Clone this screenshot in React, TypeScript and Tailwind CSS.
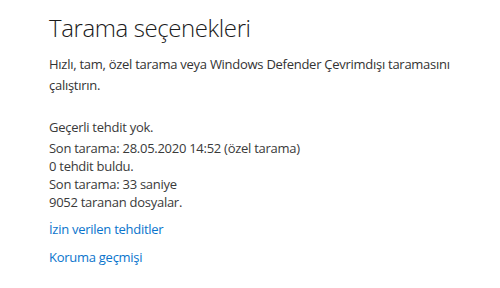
export default function App() {
  return (
    <div className="w-[500px] h-[288px] bg-white overflow-hidden pl-[49px] pt-[10px]" style={{ fontFamily: '"Open Sans", "Noto Sans", sans-serif' }}>
      <h1 className="text-[24px] leading-[36px] font-light text-[#1b1b1b] tracking-[-0.4px]">Tarama seçenekleri</h1>
      <p className="mt-[8px] text-[13px] leading-[21px] text-[#333] w-[420px] tracking-[-0.27px]">
        Hızlı, tam, özel tarama veya Windows Defender Çevrimdışı taramasını çalıştırın.
      </p>
      <div className="mt-[22px] text-[13px] leading-[18px] text-[#3a3a3a] tracking-[-0.27px]">
        <div className="mb-[3px]">Geçerli tehdit yok.</div>
        <div>Son tarama: 28.05.2020 14:52 (özel tarama)</div>
        <div>0 tehdit buldu.</div>
        <div>Son tarama: 33 saniye</div>
        <div>9052 taranan dosyalar.</div>
      </div>
      <div className="mt-[9px] text-[13px] leading-[18px] text-[#0a74cc] tracking-[-0.27px]">
        <div>İzin verilen tehditler</div>
        <div className="mt-[10px]">Koruma geçmişi</div>
      </div>
    </div>
  );
}
